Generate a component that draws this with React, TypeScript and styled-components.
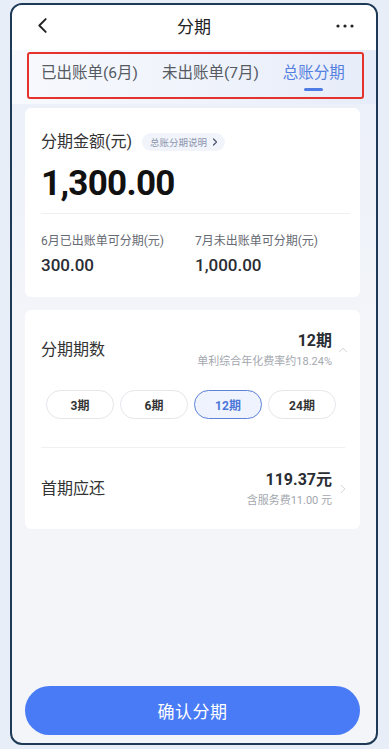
import styled, { createGlobalStyle } from "styled-components";

const GlobalStyle = createGlobalStyle`
  html, body {
    margin: 0;
    padding: 0;
    background: #e8eef7;
    font-family: Roboto, "Noto Sans CJK SC", sans-serif;
  }
  * { box-sizing: border-box; }
`

const Page = styled.div`
  padding: 3px 11px 4px 10px;
`

const Frame = styled.div`
  height: 742px;
  border: 2px solid #1e3a56;
  border-radius: 12px;
  overflow: hidden;
  display: flex;
  flex-direction: column;
  background: linear-gradient(180deg, #e9eef9 0, #f3f5f9 320px);
`

const Header = styled.header`
  height: 45px;
  flex-shrink: 0;
  background: #ffffff;
  display: flex;
  align-items: center;
  justify-content: space-between;
  padding: 0 22px 4px 22px;
`

const Title = styled.h1`
  margin: 0;
  font-size: 17px;
  font-weight: 400;
  color: #222;
`

const IconSlot = styled.div<{ $end?: boolean }>`
  width: 24px;
  display: flex;
  align-items: center;
  justify-content: ${(p) => (p.$end ? "flex-end" : "flex-start")};
`

const TabStrip = styled.div`
  flex-shrink: 0;
  padding: 2px 12px 5px 15px;
  background: linear-gradient(90deg, #f7f9fd 0%, #eef2fb 60%, #e6ecf9 100%);
`

const TabBox = styled.nav`
  height: 47px;
  border: 2px solid #e5322d;
  border-radius: 3px;
  display: flex;
  align-items: flex-start;
  gap: 24px;
  padding: 9px 0 0 12px;
`

const Tab = styled.div<{ $active?: boolean }>`
  display: flex;
  flex-direction: column;
  align-items: center;
  gap: 5px;
  font-size: 15.5px;
  line-height: 20px;
  color: ${(p) => (p.$active ? "#5680e0" : "#555a63")};
  white-space: nowrap;

  &::after {
    content: "";
    width: 19px;
    height: 3px;
    border-radius: 2px;
    background: ${(p) => (p.$active ? "#4f7be4" : "transparent")};
  }
`

const Content = styled.main`
  flex: 1;
  display: flex;
  flex-direction: column;
  gap: 13px;
  padding: 4px 16px 8px 13px;
`

const Card = styled.section<{ $pad?: string }>`
  background: #ffffff;
  border-radius: 6px;
  padding: ${(p) => p.$pad || "0"};
`

const TitleRow = styled.div`
  display: flex;
  align-items: center;
  gap: 10px;
  height: 20px;
`

const Label = styled.div`
  font-size: 16px;
  color: #333;
  line-height: 20px;
`

const Badge = styled.span`
  display: inline-flex;
  align-items: center;
  gap: 4px;
  height: 18px;
  padding: 0 6px 0 8px;
  border-radius: 9px;
  background: #f1f4fb;
  color: #8d96ad;
  font-size: 9.5px;
`

const Amount = styled.div`
  margin-top: 12px;
  font-size: 35px;
  line-height: 40px;
  font-weight: 700;
  color: #111;
  letter-spacing: -0.7px;
`

const Divider = styled.hr<{ $mt: number; $mr?: number }>`
  margin: ${(p) => p.$mt}px ${(p) => p.$mr ?? 0}px 0 0;
  border: none;
  height: 1px;
  background: #eef0f3;
`

const SplitRow = styled.div`
  display: grid;
  grid-template-columns: 154px 1fr;
  margin-top: 19px;
`

const SubLabel = styled.div`
  font-size: 12px;
  line-height: 16px;
  color: #666a72;
`

const SubValue = styled.div`
  margin-top: 5px;
  font-size: 17px;
  line-height: 22px;
  font-weight: 500;
  color: #2a2d33;
`

const InfoRow = styled.div<{ $pt: number }>`
  display: flex;
  align-items: center;
  justify-content: space-between;
  padding-top: ${(p) => p.$pt}px;
`

const RightInfo = styled.div`
  display: flex;
  align-items: center;
  gap: 6px;
`

const RightText = styled.div`
  display: flex;
  flex-direction: column;
  align-items: flex-end;
`

const StrongValue = styled.div`
  font-size: 16px;
  line-height: 22px;
  font-weight: 700;
  color: #2a2d33;
`

const Note = styled.div`
  margin-top: 2px;
  font-size: 11px;
  line-height: 16px;
  color: #a3a7ae;
`

const PillRow = styled.div`
  display: grid;
  grid-template-columns: repeat(4, 68px);
  gap: 6px;
  margin: 20px 0 0 5px;
`

const Pill = styled.button<{ $active?: boolean }>`
  height: 29px;
  border-radius: 15px;
  border: 1px solid ${(p) => (p.$active ? "#5d82d6" : "#e4e6ea")};
  background: ${(p) => (p.$active ? "#eef3fe" : "#ffffff")};
  color: ${(p) => (p.$active ? "#4b76d8" : "#333")};
  font-family: inherit;
  font-size: 12px;
  font-weight: 700;
  padding: 0;
`

const ConfirmButton = styled.button`
  margin-top: auto;
  height: 49px;
  border: none;
  border-radius: 25px;
  background: #4a7bf6;
  color: #ffffff;
  font-family: inherit;
  font-size: 17px;
  font-weight: 400;
  letter-spacing: 0.5px;
`

const Chevron = ({ dir, color, size, weight = 1.3 }: { dir: "left" | "right" | "up"; color: string; size: number; weight?: number }) => {
  const d = dir === "left" ? "M9 2 L3 8 L9 14" : dir === "right" ? "M3 2 L9 8 L3 14" : "M2 9 L8 3 L14 9";
  return (
    <svg width={size} height={size} viewBox={dir === "up" ? "0 0 16 12" : "0 0 12 16"} fill="none">
      <path d={d} stroke={color} strokeWidth={weight} strokeLinecap="round" strokeLinejoin="round" />
    </svg>
  );
};

const Dots = () => (
  <svg width="18" height="4" viewBox="0 0 18 4">
    <circle cx="2" cy="2" r="1.6" fill="#222" />
    <circle cx="9" cy="2" r="1.6" fill="#222" />
    <circle cx="16" cy="2" r="1.6" fill="#222" />
  </svg>
);

const periods = [3, 6, 12, 24];

const App = () => {
  return (
    <Page>
      <GlobalStyle />
      <Frame>
        <Header>
          <IconSlot>
            <Chevron dir="left" color="#222" size={17} weight={1.8} />
          </IconSlot>
          <Title>分期</Title>
          <IconSlot $end>
            <Dots />
          </IconSlot>
        </Header>
        <TabStrip>
          <TabBox>
            <Tab>已出账单(6月)</Tab>
            <Tab>未出账单(7月)</Tab>
            <Tab $active>总账分期</Tab>
          </TabBox>
        </TabStrip>
        <Content>
          <Card $pad="24px 10px 21px 16px">
            <TitleRow>
              <Label>分期金额(元)</Label>
              <Badge>
                总账分期说明
                <Chevron dir="right" color="#4a5368" size={8} weight={2.4} />
              </Badge>
            </TitleRow>
            <Amount>1,300.00</Amount>
            <Divider $mt={9} />
            <SplitRow>
              <div>
                <SubLabel>6月已出账单可分期(元)</SubLabel>
                <SubValue>300.00</SubValue>
              </div>
              <div>
                <SubLabel>7月未出账单可分期(元)</SubLabel>
                <SubValue>1,000.00</SubValue>
              </div>
            </SplitRow>
          </Card>
          <Card $pad="0 12px 20px 16px">
            <InfoRow $pt={20}>
              <Label>分期期数</Label>
              <RightInfo>
                <RightText>
                  <StrongValue>12期</StrongValue>
                  <Note>单利综合年化费率约18.24%</Note>
                </RightText>
                <Chevron dir="up" color="#c8cbd0" size={10} />
              </RightInfo>
            </InfoRow>
            <PillRow>
              {periods.map((n) => (
                <Pill key={n} $active={n === 12}>
                  {n}期
                </Pill>
              ))}
            </PillRow>
            <Divider $mt={28} $mr={3} />
            <InfoRow $pt={21}>
              <Label>首期应还</Label>
              <RightInfo>
                <RightText>
                  <StrongValue>119.37元</StrongValue>
                  <Note>含服务费11.00 元</Note>
                </RightText>
                <Chevron dir="right" color="#c8cbd0" size={10} />
              </RightInfo>
            </InfoRow>
          </Card>
          <ConfirmButton>确认分期</ConfirmButton>
        </Content>
      </Frame>
    </Page>
  );
};

export default App;
